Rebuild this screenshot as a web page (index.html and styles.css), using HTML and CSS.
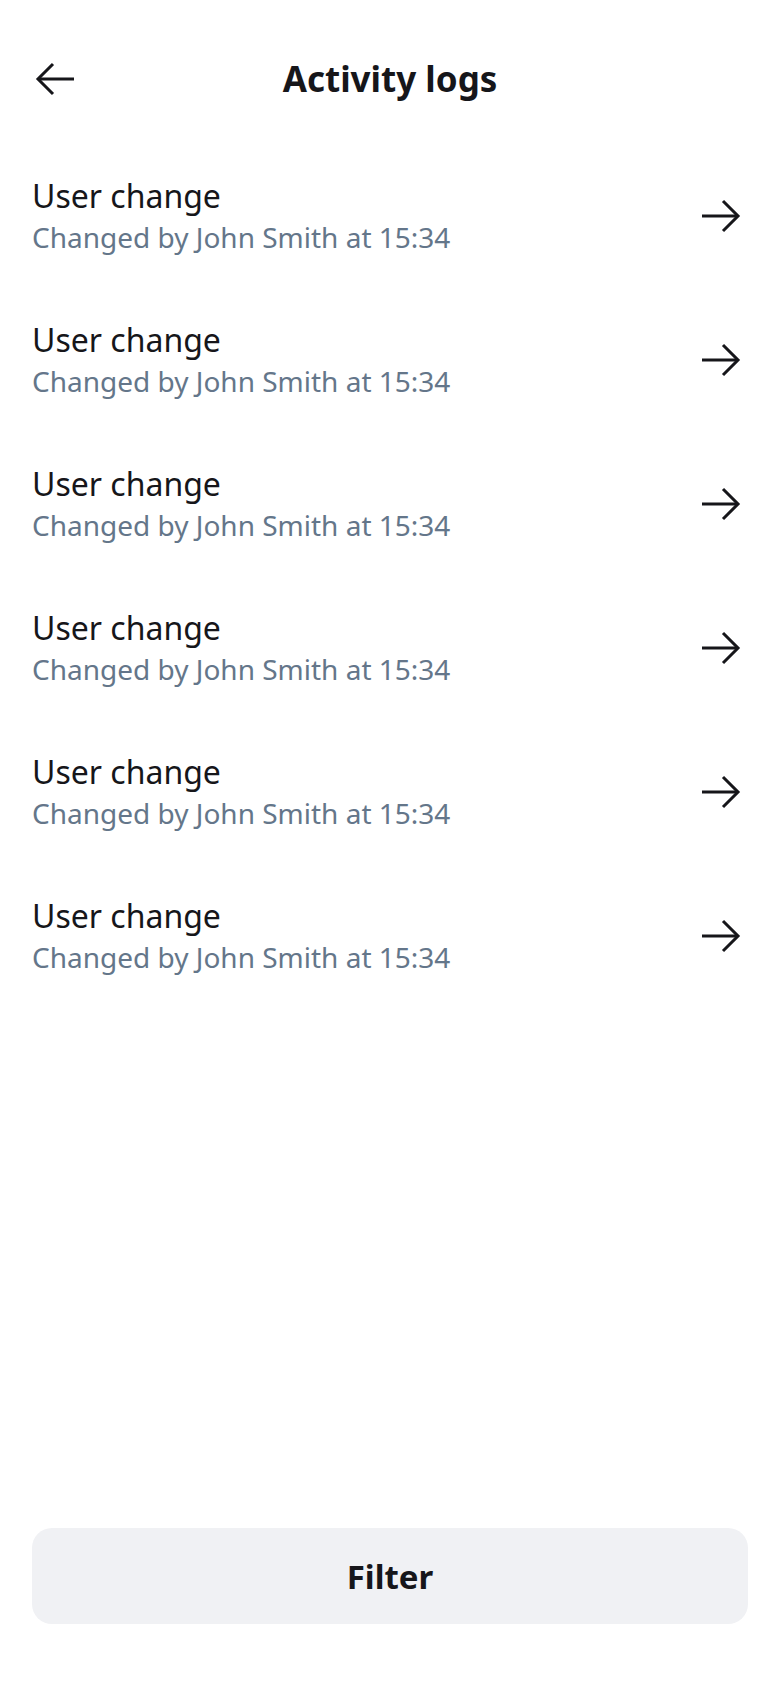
FILE: index.html
```html
<!DOCTYPE html>
<html lang="en">
<head>
<meta charset="utf-8">
<title>Activity logs</title>
<link rel="stylesheet" href="styles.css">
</head>
<body>
<div class="screen">
  <header class="header">
    <button class="icon-btn back" aria-label="Back">
      <svg width="48" height="48" viewBox="0 0 48 48" fill="none" stroke="#16161a" stroke-width="3"><path d="M42 24H7"/><path d="M21 9L6 24l15 15"/></svg>
    </button>
    <h1 class="title">Activity logs</h1>
    <span class="icon-btn spacer"></span>
  </header>
  <ul class="log-list">
    <li class="log-row"><div class="log-text"><div class="log-title">User change</div><div class="log-sub">Changed by John Smith at 15:34</div></div><svg class="chev" width="48" height="48" viewBox="0 0 48 48" fill="none" stroke="#16161a" stroke-width="3"><path d="M6 24h35"/><path d="M27 9l15 15-15 15"/></svg></li>
    <li class="log-row"><div class="log-text"><div class="log-title">User change</div><div class="log-sub">Changed by John Smith at 15:34</div></div><svg class="chev" width="48" height="48" viewBox="0 0 48 48" fill="none" stroke="#16161a" stroke-width="3"><path d="M6 24h35"/><path d="M27 9l15 15-15 15"/></svg></li>
    <li class="log-row"><div class="log-text"><div class="log-title">User change</div><div class="log-sub">Changed by John Smith at 15:34</div></div><svg class="chev" width="48" height="48" viewBox="0 0 48 48" fill="none" stroke="#16161a" stroke-width="3"><path d="M6 24h35"/><path d="M27 9l15 15-15 15"/></svg></li>
    <li class="log-row"><div class="log-text"><div class="log-title">User change</div><div class="log-sub">Changed by John Smith at 15:34</div></div><svg class="chev" width="48" height="48" viewBox="0 0 48 48" fill="none" stroke="#16161a" stroke-width="3"><path d="M6 24h35"/><path d="M27 9l15 15-15 15"/></svg></li>
    <li class="log-row"><div class="log-text"><div class="log-title">User change</div><div class="log-sub">Changed by John Smith at 15:34</div></div><svg class="chev" width="48" height="48" viewBox="0 0 48 48" fill="none" stroke="#16161a" stroke-width="3"><path d="M6 24h35"/><path d="M27 9l15 15-15 15"/></svg></li>
    <li class="log-row"><div class="log-text"><div class="log-title">User change</div><div class="log-sub">Changed by John Smith at 15:34</div></div><svg class="chev" width="48" height="48" viewBox="0 0 48 48" fill="none" stroke="#16161a" stroke-width="3"><path d="M6 24h35"/><path d="M27 9l15 15-15 15"/></svg></li>
  </ul>
  <div class="footer">
    <button class="filter-btn">Filter</button>
  </div>
</div>
</body>
</html>
```
FILE: styles.css
```css
* { box-sizing: border-box; }
html, body { margin: 0; padding: 0; background: #ffffff; }
body {
  font-family: "Noto Sans", "Open Sans", sans-serif;
  color: #16161a;
}
.screen {
  width: 780px;
  height: 1688px;
  display: flex;
  flex-direction: column;
}
.header {
  display: flex;
  align-items: center;
  justify-content: space-between;
  height: 48px;
  margin-top: 55px;
  padding: 0 32px;
}
.icon-btn {
  width: 48px;
  height: 48px;
  padding: 0;
  border: none;
  background: none;
  display: block;
}
.icon-btn svg { display: block; }
.title {
  margin: 0;
  font-size: 35px;
  font-weight: 700;
  line-height: 48px;
}
.log-list {
  list-style: none;
  margin: 41px 0 0;
  padding: 0;
}
.log-row {
  height: 144px;
  display: flex;
  align-items: center;
  justify-content: space-between;
  padding: 0 36px 0 32px;
}
.log-title {
  font-size: 32px;
  line-height: 42px;
}
.log-sub {
  font-size: 28px;
  line-height: 40px;
  color: #64768a;
}
.chev { display: block; flex: none; }
.footer {
  margin-top: auto;
  padding: 0 32px 64px;
}
.filter-btn {
  width: 100%;
  height: 96px;
  border: none;
  border-radius: 20px;
  background: #f0f1f4;
  font-family: "Noto Sans", "Open Sans", sans-serif;
  font-size: 33px;
  font-weight: 700;
  color: #16161a;
}
```
